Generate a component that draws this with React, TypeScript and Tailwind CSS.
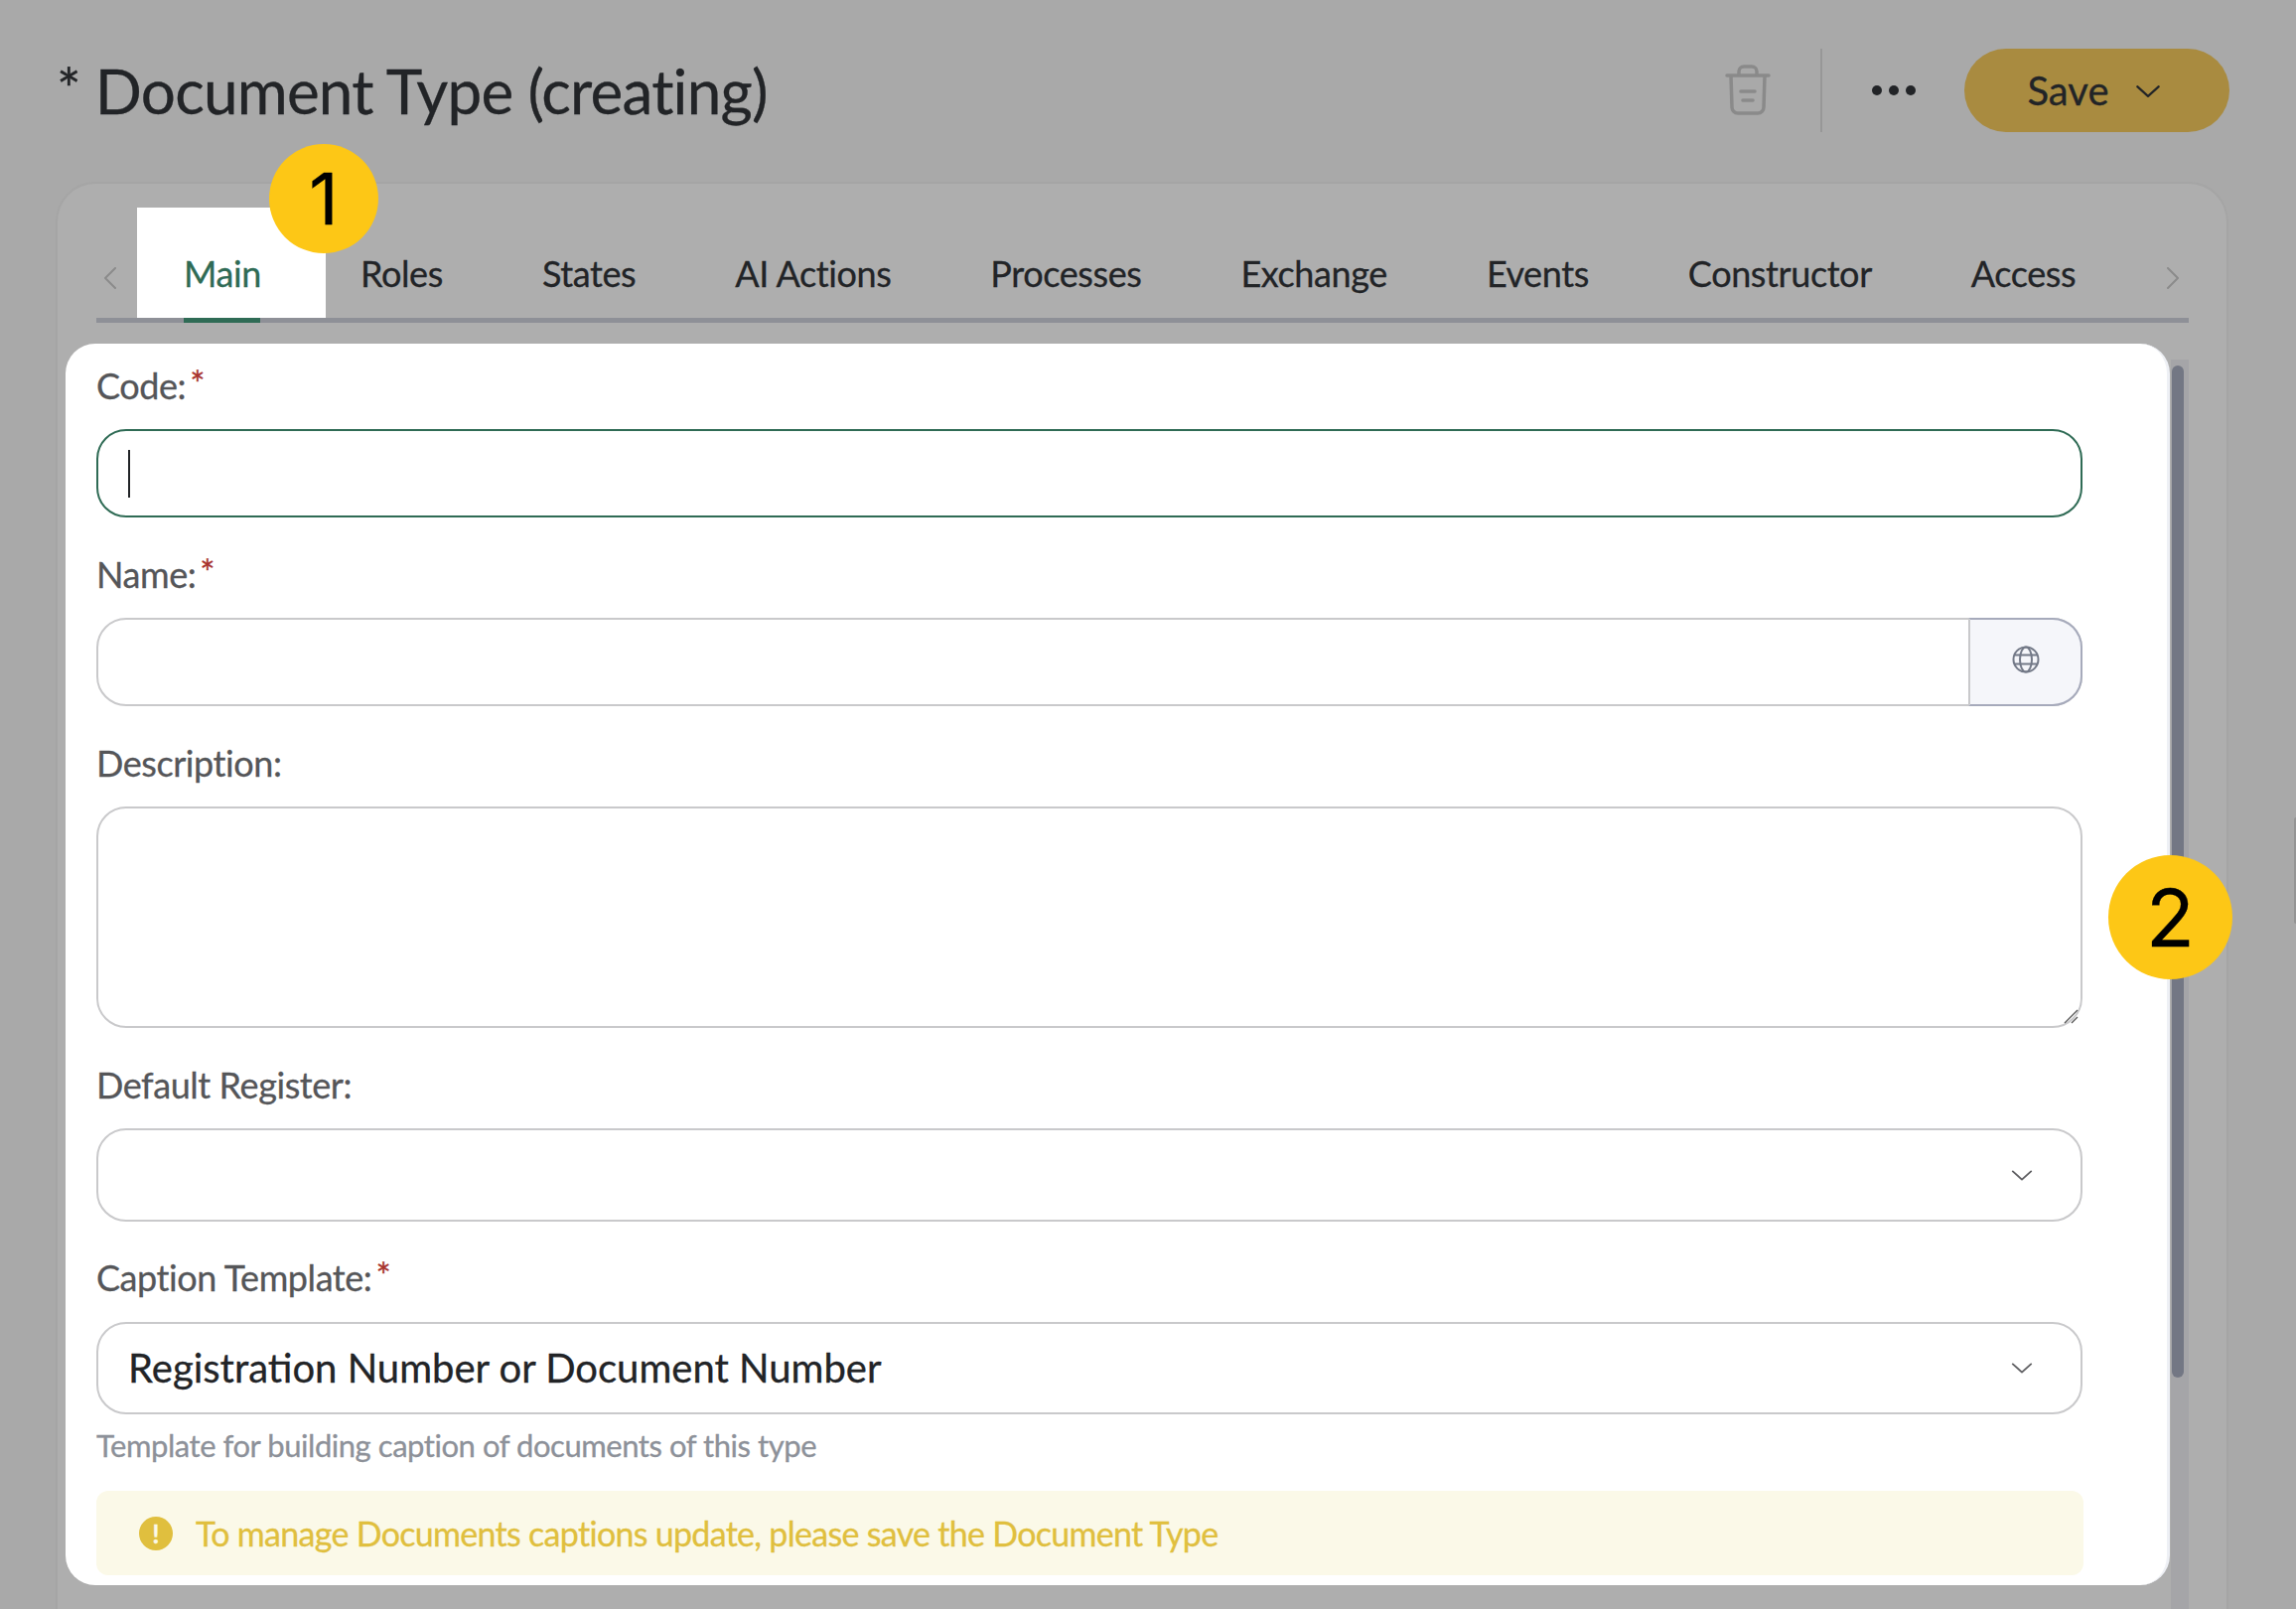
import type { ReactNode } from 'react';

const TABS = ['Roles', 'States', 'AI Actions', 'Processes', 'Exchange', 'Events', 'Constructor', 'Access'];

function Label({ text, required }: { text: string; required?: boolean }) {
  return (
    <div className="flex h-[46px] -translate-y-[1px] items-center text-[36px] leading-none tracking-[-0.43px] text-[#555659]">
      {text}
      {required && <span className="ml-[4px] -translate-y-[2px] text-[36px] text-[#a8322d]">*</span>}
    </div>
  );
}

function Field({ children, className }: { children?: ReactNode; className: string }) {
  return <div className={`mt-[20px] w-[2000px] border-2 border-[#c9c9cb] bg-white ${className}`}>{children}</div>;
}

function Badge({ n, className }: { n: string; className: string }) {
  return (
    <div
      className={`absolute flex items-center justify-center rounded-full bg-[#fdc716] font-['Inter',sans-serif] leading-none text-black ${className}`}
    >
      {n}
    </div>
  );
}

function Chevron({ dir, className }: { dir: 'left' | 'right' | 'down'; className: string }) {
  const d = dir === 'left' ? 'M12 1 2 11l10 10' : dir === 'right' ? 'M2 1l10 10L2 21' : 'M2 2l10 9 10-9';
  const box = dir === 'down' ? '0 0 24 13' : '0 0 14 22';
  return (
    <svg className={className} viewBox={box} fill="none" stroke="currentColor" strokeWidth="2" strokeLinecap="round" strokeLinejoin="round">
      <path d={d} />
    </svg>
  );
}

function TrashIcon() {
  return (
    <svg width="46" height="52" viewBox="0 0 46 52" fill="none" stroke="#8a8a8a" strokeWidth="3.5" strokeLinecap="round" strokeLinejoin="round">
      <path d="M2 11h42" />
      <path d="M14 10V7a5 5 0 0 1 5-5h8a5 5 0 0 1 5 5v3" />
      <path d="M6 12l1 31a6 6 0 0 0 6 6h20a6 6 0 0 0 6-6l1-31" />
      <path d="M16 27h14M18 36h10" />
    </svg>
  );
}

function GlobeIcon() {
  return (
    <svg className="mb-[6px]" width="28" height="28" viewBox="0 0 28 28" fill="none" stroke="#737987" strokeWidth="2">
      <circle cx="14" cy="14" r="12.5" />
      <ellipse cx="14" cy="14" rx="6" ry="12.5" />
      <path d="M3 9.5h22M3 18.5h22" />
    </svg>
  );
}

export default function App() {
  return (
    <div className="relative h-[1620px] w-[2312px] overflow-hidden bg-[#a9a9a9] font-['Lato',sans-serif] [-webkit-text-stroke:0.3px]">
      {/* header */}
      <div className="flex h-[183px] items-start pl-[57px] pr-[67px]">
        <h1 className="mt-[52px] flex text-[62px] leading-[78px] tracking-[-0.8px] text-[#222427]">
          <span className="mr-[15px] -translate-y-[2px] text-[58px]">*</span>
          Document Type (creating)
        </h1>
        <div className="ml-auto mt-[49px] flex h-[84px] items-center">
          <TrashIcon />
          <div className="ml-[50px] h-[84px] w-[2px] bg-[#979797]" />
          <div className="ml-[50px] flex gap-[7px]">
            <span className="h-[10px] w-[10px] rounded-full bg-[#222427]" />
            <span className="h-[10px] w-[10px] rounded-full bg-[#222427]" />
            <span className="h-[10px] w-[10px] rounded-full bg-[#222427]" />
          </div>
          <button className="ml-[49px] flex h-[84px] w-[267px] items-center justify-center rounded-full bg-[#a98b40] pr-[6px] text-[40px] text-[#222427]">
            Save
            <Chevron dir="down" className="ml-[26px] mt-[2px] h-[14px] w-[26px]" />
          </button>
        </div>
      </div>

      {/* card */}
      <div className="ml-[56px] h-[1437px] w-[2188px] rounded-t-[40px] border-2 border-b-0 border-[#a5a5a5] bg-[#aeaeae] pl-[39px]">
        {/* tabs */}
        <div className="flex h-[140px] w-[2107px] items-end border-b-[5px] border-[#8e9097]">
          <div className="flex h-[111px] w-[41px] items-center pl-[7px]">
            <Chevron dir="left" className="mt-[30px] h-[22px] w-[14px] text-[#8b8b8b]" />
          </div>
          <div className="flex h-[111px] w-[190px] items-start bg-white pl-[47px]">
            <div className="flex h-full flex-col justify-between">
              <span className="mt-[43px] text-[36px] leading-[46px] tracking-[-0.4px] text-[#2f6b55]">Main</span>
              <span className="-mb-[5px] h-[5px] w-[77px] bg-[#2f6b55]" />
            </div>
          </div>
          <div className="-ml-[15px] flex h-[111px] items-start">
            {TABS.map((t) => (
              <span key={t} className="mt-[43px] px-[50px] text-[36px] leading-[46px] tracking-[-0.4px] text-[#222427]">
                {t}
              </span>
            ))}
          </div>
          <div className="ml-auto flex h-[111px] items-center pr-[9px]">
            <Chevron dir="right" className="mt-[30px] h-[22px] w-[14px] text-[#8b8b8b]" />
          </div>
        </div>

        {/* body */}
        <div className="-ml-[31px] mt-[21px] flex">
          <div className="h-[1250px] w-[2119px] rounded-[30px] border-r-[3px] border-[#eef0f5] bg-white pl-[31px] pt-[20px]">
            <Label text="Code:" required />
            <div className="mt-[20px] flex h-[89px] w-[2000px] items-center rounded-[30px] border-2 border-[#2f6b55] bg-white pl-[30px]">
              <span className="h-[48px] w-[2px] bg-[#222427]" />
            </div>

            <div className="mt-[35px]">
              <Label text="Name:" required />
              <Field className="flex h-[89px] rounded-[30px]">
                <div className="flex-1" />
                <div className="-my-[2px] -mr-[2px] flex w-[115px] items-center justify-center rounded-r-[30px] border-2 border-[#a6aabb] border-l-[#c9c9cb] bg-[#f5f6fa]">
                  <GlobeIcon />
                </div>
              </Field>
            </div>

            <div className="mt-[35px]">
              <Label text="Description:" />
              <Field className="relative h-[223px] rounded-[30px]">
                <svg className="absolute bottom-[2px] right-[2px]" width="16" height="16" viewBox="0 0 16 16" stroke="#555" strokeWidth="1.3">
                  <path d="M2 15 15 2M9 15l6-6" />
                </svg>
              </Field>
            </div>

            <div className="mt-[35px]">
              <Label text="Default Register:" />
              <Field className="flex h-[94px] items-center justify-end rounded-[30px] pr-[48px]">
                <Chevron dir="down" className="h-[13px] w-[22px] text-[#5f5f62]" />
              </Field>
            </div>

            <div className="mt-[34px]">
              <Label text="Caption Template:" required />
              <Field className="mt-[21px] flex h-[93px] items-center justify-between rounded-[30px] pl-[30px] pr-[48px]">
                <span className="-translate-y-[1px] text-[40px] text-[#222427]">Registration Number or Document Number</span>
                <Chevron dir="down" className="h-[13px] w-[22px] text-[#5f5f62]" />
              </Field>
            </div>

            <div className="mt-[11px] h-[40px] text-[31px] leading-[40px] tracking-[-0.45px] text-[#8d9199]">
              Template for building caption of documents of this type
            </div>

            <div className="mt-[26px] flex h-[85px] w-[2001px] items-center rounded-[12px] bg-[#fbf9e8] pl-[43px]">
              <span className="flex h-[34px] w-[34px] items-center justify-center rounded-full bg-[#e0bf3e] text-[26px] font-bold leading-none text-[#fbf9e8]">
                !
              </span>
              <span className="ml-[23px] text-[34px] tracking-[-0.7px] text-[#e0bf3e]">
                To manage Documents captions update, please save the Document Type
              </span>
            </div>
          </div>

          {/* scrollbar */}
          <div className="ml-[1px] mt-[16px] h-[1300px] w-[18px] bg-[#a5a5a8] pl-[1px] pt-[6px]">
            <div className="h-[1019px] w-[12px] rounded-full bg-[#737784]" />
          </div>
        </div>
      </div>

      <Badge n="1" className="left-[271px] top-[145px] h-[110px] w-[110px] text-[72px]" />
      <Badge n="2" className="left-[2123px] top-[861px] h-[125px] w-[125px] text-[80px]" />
      <div className="absolute right-0 top-[823px] h-[107px] w-[2px] rounded-l-full bg-[#949494]" />
    </div>
  );
}
